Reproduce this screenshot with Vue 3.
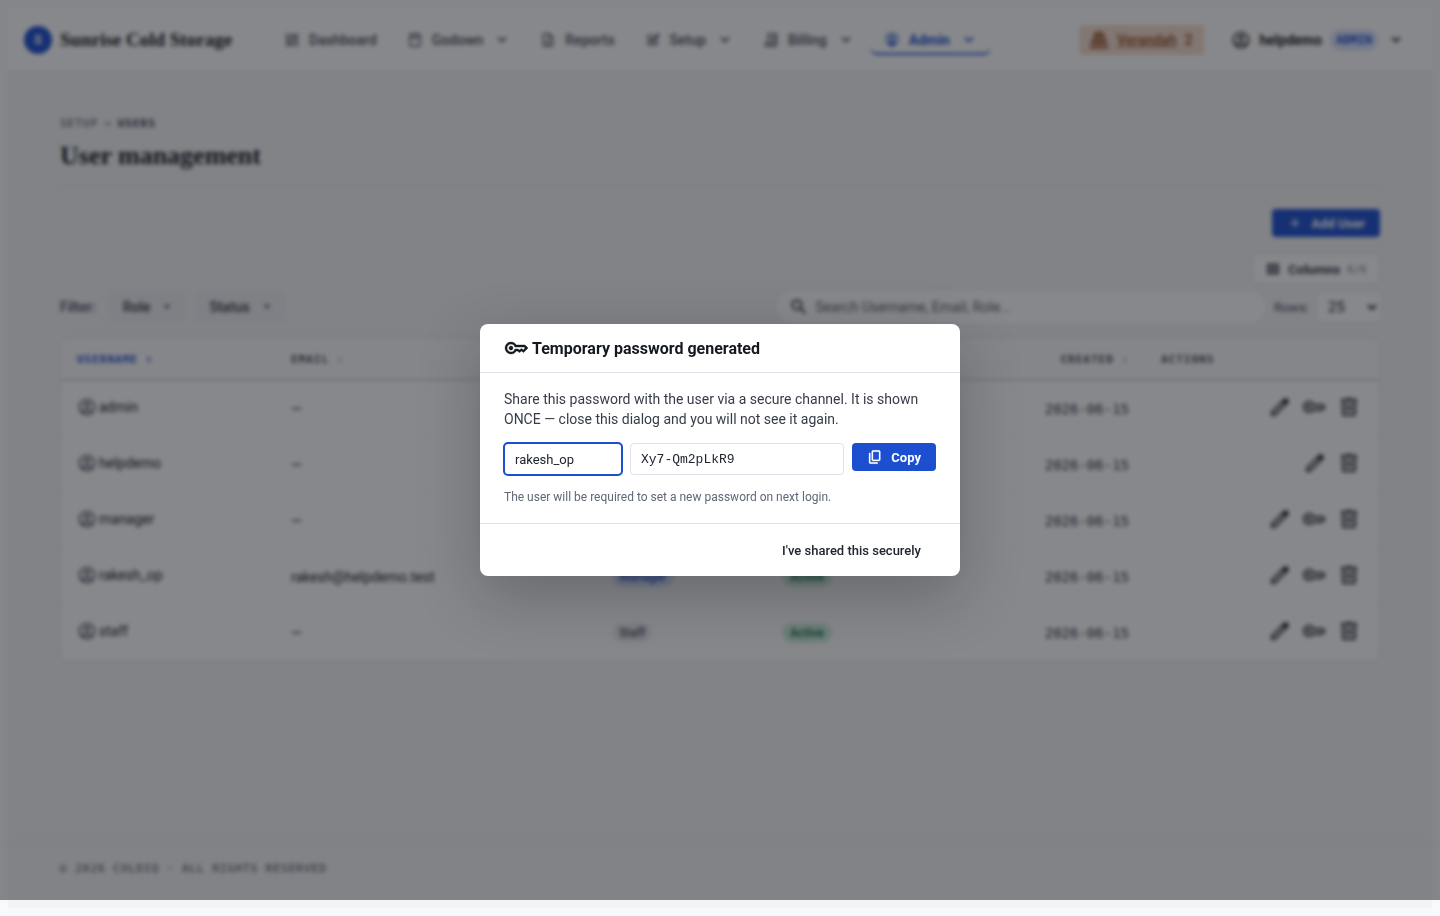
<script setup>
import { ref, onMounted } from 'vue'

const icons = {
    dashboard: 'M3 3h8v10H3V3zm2 2v6h4V5H5zm8-2h8v6h-8V3zm2 2v2h4V5h-4zm-2 6h8v10h-8V11zm2 2v6h4v-6h-4zM3 15h8v6H3v-6zm2 2v2h4v-2H5z',
    godown: 'M5 2h14l2 4v13a3 3 0 0 1-3 3H6a3 3 0 0 1-3-3V6l2-4zm1.200 2-1 2h13.600l-1-2H6.200zM5 8v11a1 1 0 0 0 1 1h12a1 1 0 0 0 1-1V8H5zm4 2h6v2H9v-2z',
    reports: 'M6 2h8l6 6v12a2 2 0 0 1-2 2H6a2 2 0 0 1-2-2V4a2 2 0 0 1 2-2zm0 2v16h12V9h-5V4H6zm2 8h8v2H8v-2zm0 4h8v2H8v-2z',
    setup: 'M4 4h8v2H6v12h11v-6h2v8H4V4zm15-2 3 3-8 8-4 1 1-4 8-8zM7 9h3v2H7V9zm0 5h8v2H7v-2z',
    billing: 'M7 2h14v17a3 3 0 0 1-3 3H5a3 3 0 0 1-3-3v-3h5V2zm2 2v12h7v3a1 1 0 0 0 2 0V4H9zm2 3h6v2h-6V7zm0 4h6v2h-6v-2zM4 18v1a1 1 0 0 0 1 1h9v-2H4z',
    admin: 'M12 1l9 4v6c0 5.500-3.800 10.700-9 12-5.200-1.300-9-6.500-9-12V5l9-4zm0 2.200L5 6.300V11c0 4.500 3 8.700 7 9.900 4-1.200 7-5.400 7-9.900V6.300l-7-3.100zM12 6a3 3 0 1 1 0 6 3 3 0 0 1 0-6zm0 7c2 0 4 1 5 2.500-1 2-3 3.500-5 4-2-.5-4-2-5-4C8 14 10 13 12 13z',
    verandah: 'M12 1l7 5v3H5V6l7-5zm0 3a1.500 1.500 0 1 0 0 3 1.500 1.500 0 0 0 0-3zM3 11h18v6h-3v-3h-2v3h-3v-3h-2v3H8v-3H6v3H3v-6zM1 19h22v3H1v-3z',
    account: 'M12 2C6.480 2 2 6.480 2 12s4.480 10 10 10 10-4.480 10-10S17.520 2 12 2zM7.350 18.500C8.660 17.560 10.260 17 12 17s3.340.56 4.650 1.500c-1.310.94-2.910 1.500-4.650 1.500s-3.340-.56-4.650-1.500zm10.790-1.380a9.947 9.947 0 0 0-12.280 0A7.957 7.957 0 0 1 4 12c0-4.420 3.580-8 8-8s8 3.580 8 8c0 1.950-.7 3.730-1.860 5.120zM12 6c-1.930 0-3.500 1.570-3.500 3.500S10.070 13 12 13s3.500-1.570 3.500-3.500S13.930 6 12 6zm0 5c-.83 0-1.500-.67-1.500-1.500S11.170 8 12 8s1.500.67 1.500 1.500S12.830 11 12 11z',
    chevron: 'M12 16l-7-7L7 7l5 5 5-5 2 2-7 7z',
    plus: 'M11 5h2v6h6v2h-6v6h-2v-6H5v-2h6V5z',
    columns: 'M3 4h18v16H3V4zm2 3v4h3V7H5zm5 0v4h4V7h-4zm6 0v4h3V7h-3zM5 13v4h3v-4H5zm5 0v4h4v-4h-4zm6 0v4h3v-4h-3z',
    search: 'M15.500 14h-.79l-.28-.27A6.471 6.471 0 0 0 16 9.500 6.500 6.500 0 1 0 9.500 16c1.610 0 3.090-.59 4.230-1.570l.27.28v.79l5 4.990L20.490 19l-4.990-5zm-6 0C7.010 14 5 11.990 5 9.500S7.010 5 9.500 5 14 7.010 14 9.500 11.990 14 9.500 14z'
}

const symbols = {
    key: 'M280-400q-33 0-56.500-23.500T200-480q0-33 23.500-56.500T280-560q33 0 56.500 23.500T360-480q0 33-23.500 56.500T280-400Zm0 160q-100 0-170-70T40-480q0-100 70-170t170-70q67 0 121.500 33t86.500 87h352l120 120-180 180-80-60-80 60-85-60h-47q-32 54-86.500 87T280-240Zm0-80q56 0 98.500-34t56.500-86h125l58 41 82-61 71 55 75-75-40-40H435q-14-52-56.500-86T280-640q-66 0-113 47t-47 113q0 66 47 113t113 47Z',
    copy: 'M360-240q-33 0-56.500-23.500T280-320v-480q0-33 23.500-56.500T360-880h360q33 0 56.500 23.500T800-800v480q0 33-23.500 56.500T720-240H360Zm0-80h360v-480H360v480ZM200-80q-33 0-56.500-23.500T120-160v-560h80v560h440v80H200Z',
    edit: 'M160-120v-170l527-526q12-12 27-18t30-6q16 0 30.500 6t25.500 18l56 56q12 11 18 25.500t6 30.500q0 15-6 30t-18 27L330-120H160Zm80-80h56l393-392-28-29-29-28-392 393v56Z',
    trash: 'M280-120q-33 0-56.500-23.500T200-200v-520h-40v-80h200v-40h240v40h200v80h-40v520q0 33-23.500 56.500T680-120H280Zm400-600H280v520h400v-520ZM360-280h80v-360h-80v360Zm160 0h80v-360h-80v360Z'
}

const navItems = [
    { label: 'Dashboard', icon: 'dashboard' },
    { label: 'Godown', icon: 'godown', menu: true },
    { label: 'Reports', icon: 'reports' },
    { label: 'Setup', icon: 'setup', menu: true },
    { label: 'Billing', icon: 'billing', menu: true },
    { label: 'Admin', icon: 'admin', menu: true, active: true }
]

const users = ref([
    { name: 'admin', email: '—', role: 'Admin', actions: ['edit', 'key', 'trash'] },
    { name: 'helpdemo', email: '—', role: 'Admin', actions: ['edit', 'trash'] },
    { name: 'manager', email: '—', role: 'Manager', actions: ['edit', 'key', 'trash'] },
    { name: 'rakesh_op', email: 'rakesh@helpdemo.test', role: 'Manager', actions: ['edit', 'key', 'trash'] },
    { name: 'staff', email: '—', role: 'Staff', actions: ['edit', 'key', 'trash'] }
])

const actionLabels = { edit: 'Edit', key: 'Reset password', trash: 'Delete' }

const search = ref('')
const rows = ref('25')
const showDialog = ref(true)
const username = ref('rakesh_op')
const password = ref('Xy7-Qm2pLkR9')
const usernameInput = ref(null)

const copyPassword = () => {
    navigator.clipboard?.writeText(password.value)
}

onMounted(() => {
    usernameInput.value?.focus()
})
</script>

<template>
    <div class="app">
        <header class="topbar">
            <a href="#" class="brand">
                <span class="brand-mark">S</span>
                <span class="brand-name">Sunrise Cold Storage</span>
            </a>
            <nav class="nav">
                <a v-for="item in navItems" :key="item.label" href="#" class="nav-item" :class="{ active: item.active }">
                    <svg class="icon-16" viewBox="0 0 24 24"><path :d="icons[item.icon]" /></svg>
                    <span>{{ item.label }}</span>
                    <svg v-if="item.menu" class="icon-16 caret" viewBox="0 0 24 24"><path :d="icons.chevron" /></svg>
                </a>
            </nav>
            <a href="#" class="verandah">
                <svg class="icon-20" viewBox="0 0 24 24"><path :d="icons.verandah" /></svg>
                <span class="verandah-name">Verandah</span>
                <span>2</span>
            </a>
            <button class="account">
                <svg class="icon-20" viewBox="0 0 24 24"><path :d="icons.account" /></svg>
                <span>helpdemo</span>
                <span class="role-tag">ADMIN</span>
                <svg class="icon-16 caret" viewBox="0 0 24 24"><path :d="icons.chevron" /></svg>
            </button>
        </header>

        <main class="content">
            <div class="crumbs">
                <a href="#">SETUP</a>
                <span>→</span>
                <strong>USERS</strong>
            </div>
            <h1>User management</h1>

            <div class="actions-row">
                <button class="btn primary">
                    <svg class="icon-16" viewBox="0 0 24 24"><path :d="icons.plus" /></svg>
                    Add User
                </button>
            </div>
            <div class="columns-row">
                <button class="columns-btn">
                    <svg class="icon-16" viewBox="0 0 24 24"><path :d="icons.columns" /></svg>
                    Columns <small>6/6</small>
                </button>
            </div>

            <div class="toolbar">
                <span class="muted filter-label">Filter:</span>
                <button class="pill">Role <i class="tri"></i></button>
                <button class="pill">Status <i class="tri"></i></button>
                <label class="search">
                    <svg class="icon-20" viewBox="0 0 24 24"><path :d="icons.search" /></svg>
                    <input v-model="search" type="text" placeholder="Search Username, Email, Role..." />
                </label>
                <label for="rows" class="muted rows-label">Rows:</label>
                <select id="rows" v-model="rows" class="rows">
                    <option>25</option>
                    <option>50</option>
                </select>
            </div>

            <div class="table-card">
                <table>
                    <colgroup>
                        <col class="col-user" />
                        <col class="col-email" />
                        <col class="col-role" />
                        <col class="col-role" />
                        <col class="col-created" />
                        <col class="col-actions" />
                    </colgroup>
                    <thead>
                        <tr>
                            <th class="sorted">USERNAME ↑</th>
                            <th>EMAIL <span class="sort">↕</span></th>
                            <th>ROLE <span class="sort">↕</span></th>
                            <th>STATUS <span class="sort">↕</span></th>
                            <th class="right">CREATED <span class="sort">↕</span></th>
                            <th>ACTIONS</th>
                        </tr>
                    </thead>
                    <tbody>
                        <tr v-for="user in users" :key="user.name">
                            <td class="with-icon">
                                <span class="user">
                                    <svg class="icon-20" viewBox="0 0 24 24"><path :d="icons.account" /></svg>
                                    {{ user.name }}
                                </span>
                            </td>
                            <td>{{ user.email }}</td>
                            <td><span class="badge" :class="user.role.toLowerCase()">{{ user.role }}</span></td>
                            <td><span class="badge status">Active</span></td>
                            <td class="right date">2026-06-15</td>
                            <td class="with-icon">
                                <div class="row-actions">
                                    <button v-for="action in user.actions" :key="action" :aria-label="actionLabels[action]">
                                        <svg class="icon-24" viewBox="0 -960 960 960"><path :d="symbols[action]" /></svg>
                                    </button>
                                </div>
                            </td>
                        </tr>
                    </tbody>
                </table>
            </div>
        </main>

        <footer class="footer">
            <div class="footer-inner">© 2026 COLDIQ · ALL RIGHTS RESERVED</div>
        </footer>
    </div>

    <div v-if="showDialog" class="backdrop">
        <section class="dialog" role="dialog" aria-modal="true" aria-labelledby="dialog-title">
            <div class="dialog-header">
                <svg class="icon-24 bold" viewBox="0 -960 960 960"><path :d="symbols.key" /></svg>
                <h2 id="dialog-title">Temporary password generated</h2>
            </div>
            <div class="dialog-body">
                <p>Share this password with the user via a secure channel. It is shown ONCE — close this dialog and you will not see it again.</p>
                <div class="credentials">
                    <input ref="usernameInput" v-model="username" class="username" type="text" readonly aria-label="Username" />
                    <input v-model="password" class="password" type="text" readonly aria-label="Password" />
                    <button class="btn primary" @click="copyPassword">
                        <svg class="icon-16 bold" viewBox="0 -960 960 960"><path :d="symbols.copy" /></svg>
                        Copy
                    </button>
                </div>
                <p class="hint">The user will be required to set a new password on next login.</p>
            </div>
            <div class="dialog-footer">
                <button class="btn ghost" @click="showDialog = false">I've shared this securely</button>
            </div>
        </section>
    </div>
</template>

<style>
body {
    background-color: #f8f9fb;
}

#app {
    padding: 8px;
}
</style>

<style scoped>
* {
    box-sizing: border-box;
}

.app,
.backdrop {
    font-family: Roboto, "Liberation Sans", sans-serif;
    font-size: 14px;
    color: #14181f;
}

.app {
    display: flex;
    flex-direction: column;
    min-height: calc(100vh - 16px);
    background-color: #f3f4f6;
}

button,
input,
select {
    font-family: inherit;
}

a {
    color: inherit;
    text-decoration: none;
}

svg {
    fill: currentColor;
    flex: none;
}

.icon-16 {
    width: 16px;
    height: 16px;
}

.icon-20 {
    width: 20px;
    height: 20px;
}

.icon-24 {
    width: 24px;
    height: 24px;
}

.bold {
    stroke: currentColor;
    stroke-width: 16;
}

.caret {
    margin-left: 2px;
}

.topbar {
    display: flex;
    align-items: center;
    height: 64px;
    padding: 0 16px;
    background-color: #fff;
    border-bottom: 1px solid #e7e9ef;
}

.brand {
    display: flex;
    align-items: center;
    gap: 8px;
    margin-right: 38px;
}

.brand-mark {
    display: flex;
    align-items: center;
    justify-content: center;
    width: 28px;
    height: 28px;
    border-radius: 50%;
    background-color: #1c4fd0;
    color: #fff;
    font-size: 12px;
    font-weight: 700;
}

.brand-name {
    font-family: "Liberation Serif", serif;
    font-size: 19px;
    font-weight: 700;
}

.nav {
    display: flex;
    gap: 2px;
    flex: 1;
}

.nav-item {
    display: flex;
    align-items: center;
    gap: 9px;
    height: 30px;
    padding: 2px 14px 0;
    border-bottom: 2px solid transparent;
    border-radius: 8px;
    color: #414958;
    font-weight: 500;
}

.nav-item.active {
    border-bottom-color: #1c4fd0;
    color: #1c4fd0;
    font-weight: 700;
}

.verandah {
    display: flex;
    align-items: center;
    gap: 8px;
    height: 30px;
    margin-right: 27px;
    padding: 0 12px 0 10px;
    border-radius: 4px;
    background-color: #f5dccd;
    color: #8f4518;
    font-weight: 500;
}

.verandah-name {
    text-decoration: underline;
}

.account {
    display: flex;
    align-items: center;
    gap: 8px;
    padding: 0 12px 0 0;
    border: none;
    background: none;
    color: #14181f;
    font-size: 14px;
    font-weight: 700;
}

.role-tag {
    padding: 4px 6px;
    border-radius: 12px;
    background-color: #dbe5fd;
    color: #1c4fd0;
    font-family: "DejaVu Sans Mono", monospace;
    font-size: 12px;
}

.content {
    flex: 1;
    width: 100%;
    max-width: 1320px;
    margin: 0 auto;
    padding-top: 44px;
}

.crumbs,
th,
.footer {
    font-family: "DejaVu Sans Mono", monospace;
    font-size: 11px;
    letter-spacing: 1px;
    color: #414958;
}

.crumbs {
    display: flex;
    gap: 6px;
    line-height: 16px;
}

.crumbs strong {
    color: #303745;
}

h1 {
    margin: 8px 0 0;
    padding-bottom: 13px;
    border-bottom: 1px solid #eceef2;
    font-family: "Liberation Serif", serif;
    font-size: 26px;
    line-height: 32px;
}

.actions-row,
.columns-row {
    display: flex;
    justify-content: flex-end;
}

.actions-row {
    margin-top: 23px;
}

.columns-row {
    margin-top: 17px;
}

.btn {
    display: flex;
    align-items: center;
    gap: 8px;
    height: 28px;
    padding: 0 15px;
    border: none;
    border-radius: 4px;
    font-size: 13px;
    font-weight: 700;
    cursor: pointer;
}

.btn.primary {
    background-color: #1c4fd0;
    color: #fff;
}

.btn.ghost {
    background: none;
    color: #20252f;
    font-weight: 500;
}

.columns-btn {
    display: flex;
    align-items: center;
    gap: 7px;
    height: 30px;
    padding: 0 12px;
    border: 1px solid #e1e4ea;
    border-radius: 4px;
    background-color: #fff;
    color: #303745;
    font-size: 13px;
    font-weight: 700;
}

.columns-btn small {
    color: #7a8290;
    font-family: "DejaVu Sans Mono", monospace;
    font-size: 11px;
    font-weight: 400;
}

.toolbar {
    display: flex;
    align-items: center;
    gap: 9px;
    margin-top: 7px;
}

.muted {
    color: #414958;
    font-weight: 500;
}

.filter-label {
    margin-right: 4px;
}

.pill {
    display: flex;
    align-items: center;
    gap: 14px;
    height: 30px;
    padding: 0 14px;
    border: none;
    border-radius: 6px;
    background-color: #eeeef3;
    color: #303745;
    font-size: 14px;
    font-weight: 500;
}

.tri {
    margin-right: 2px;
    border: 3px solid transparent;
    border-top: 4px solid #414958;
    border-bottom: none;
}

.search {
    display: flex;
    align-items: center;
    gap: 5px;
    width: 37%;
    height: 32px;
    margin-left: auto;
    padding: 0 12px;
    border-radius: 16px;
    background-color: #fff;
}

.search input {
    flex: 1;
    border: none;
    background: none;
    font-size: 14px;
}

.search input::placeholder {
    color: #5b6472;
}

.rows-label {
    font-size: 13px;
    font-weight: 400;
}

.rows {
    width: 62px;
    height: 28px;
    padding: 0 6px;
    border: none;
    border-radius: 4px;
    background-color: #fff;
    color: #14181f;
    font-size: 15px;
}

.table-card {
    margin-top: 15px;
    border: 1px solid #e1e4ea;
    border-radius: 6px;
    background-color: #fff;
    overflow: hidden;
}

table {
    width: 100%;
    table-layout: fixed;
    border-collapse: collapse;
}

.col-user {
    width: 214px;
}

.col-email {
    width: 321px;
}

.col-role {
    width: 170px;
}

.col-created {
    width: 209px;
}

.col-actions {
    width: 234px;
}

th {
    height: 41px;
    padding: 0 16px;
    border-bottom: 2px solid #d3d8e2;
    background-color: #fafbfc;
    text-align: left;
    white-space: nowrap;
}

th.sorted {
    color: #1c4fd0;
}

.sort {
    opacity: 0.3;
}

td {
    height: 56px;
    padding: 2px 16px 0;
    border-bottom: 1px solid #f5f6f8;
}

tr:last-child td {
    border-bottom: none;
}

td.with-icon {
    padding: 0 16px 2px;
}

.right {
    text-align: right;
}

.date {
    font-family: "DejaVu Sans Mono", monospace;
    color: #303745;
}

.user {
    display: flex;
    align-items: center;
    gap: 2px;
}

.user svg {
    color: #414958;
}

.badge {
    display: inline-block;
    padding: 2px 7px;
    border-radius: 10px;
    background-color: #eeeef3;
    color: #414958;
    font-size: 12px;
    font-weight: 500;
    line-height: 16px;
}

.badge.manager,
.badge.admin {
    background-color: #dbe5fd;
    color: #1c4fd0;
}

.badge.status {
    padding: 2px 8px;
    background-color: #cdeedd;
    color: #08683c;
}

.row-actions {
    display: flex;
    justify-content: flex-end;
    gap: 7px;
}

.row-actions button {
    display: flex;
    align-items: center;
    justify-content: center;
    width: 28px;
    height: 28px;
    padding: 0;
    border: none;
    background: none;
    color: #20252f;
}

.footer {
    height: 66px;
    border-top: 1px solid #dfe5ec;
    line-height: 52px;
}

.footer-inner {
    max-width: 1320px;
    margin: 0 auto;
}

.backdrop {
    position: fixed;
    inset: 0 0 16px;
    display: flex;
    align-items: center;
    justify-content: center;
    background-color: rgba(15, 17, 23, 0.5);
    backdrop-filter: blur(2px);
}

.dialog {
    width: 480px;
    max-width: 100%;
    border-radius: 8px;
    background-color: #fff;
    box-shadow: 0 20px 60px rgba(15, 17, 23, 0.25);
}

.dialog-header {
    display: flex;
    align-items: center;
    gap: 4px;
    height: 49px;
    padding: 0 24px;
    border-bottom: 1px solid #dfe1ea;
}

h2 {
    margin: 0;
    font-size: 16px;
    font-weight: 700;
}

.dialog-body {
    padding: 16px 24px 18px;
}

.dialog-body p {
    margin: 0;
    color: #363c49;
    line-height: 20px;
}

.credentials {
    display: flex;
    align-items: flex-start;
    gap: 8px;
    margin: 14px 0;
}

.credentials input {
    min-width: 0;
    height: 32px;
    padding: 0 10px;
    border: 1px solid #dfe1ea;
    border-radius: 4px;
    background-color: #fff;
    color: #20252f;
    font-size: 13px;
}

.credentials input:focus {
    outline: 2px solid #1c4fd0;
    outline-offset: -1px;
}

.credentials .username {
    width: 118px;
}

.credentials .password {
    flex: 1;
    font-family: "Liberation Mono", monospace;
}

.dialog-body .hint {
    color: #5f6877;
    font-size: 12px;
    line-height: 16px;
}

.dialog-footer {
    display: flex;
    align-items: center;
    justify-content: flex-end;
    height: 53px;
    padding: 0 24px;
    border-top: 1px solid #dfe1ea;
}
</style>
